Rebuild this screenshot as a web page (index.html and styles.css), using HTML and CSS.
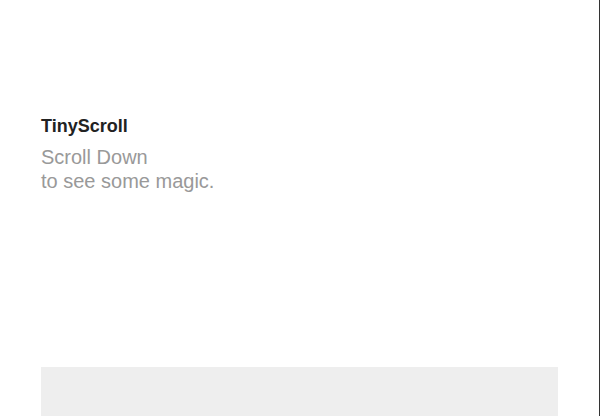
FILE: index.html
```html
<!DOCTYPE html>
<html>
<head>
<meta charset="utf-8">
<link rel="stylesheet" href="styles.css">
</head>
<body>
<div class="page">
  <div class="intro">
    <h1 class="title">TinyScroll</h1>
    <p class="lead">Scroll Down<br>to see some magic.</p>
  </div>
  <div class="panel"></div>
</div>
</body>
</html>
```
FILE: styles.css
```css
html, body {
  margin: 0;
  padding: 0;
  background: #ffffff;
}
.page {
  box-sizing: border-box;
  height: 416px;
  overflow: hidden;
  border-right: 1px solid #333333;
  padding: 115px 41px 0 41px;
  display: flex;
  flex-direction: column;
  font-family: "Liberation Sans", Arial, sans-serif;
}
.intro {
  height: 252px;
  flex-shrink: 0;
}
.title {
  margin: 0;
  font-size: 18px;
  line-height: 22px;
  font-weight: bold;
  color: #222222;
}
.lead {
  margin: 8px 0 0 0;
  font-size: 20px;
  line-height: 24px;
  color: #999999;
}
.panel {
  height: 80px;
  flex-shrink: 0;
  background: #eeeeee;
}
```
